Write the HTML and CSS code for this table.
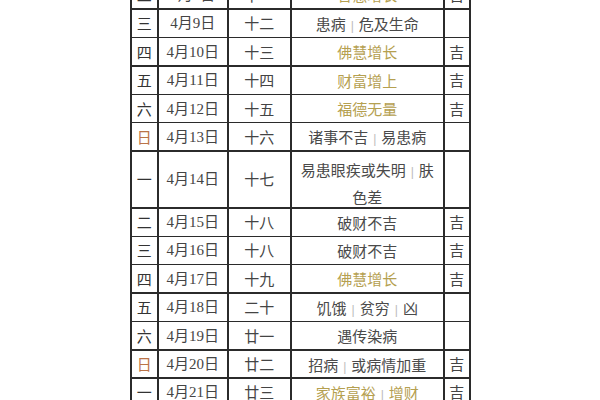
FILE: index.html
```html
<!DOCTYPE html>
<html lang="zh">
<head>
<meta charset="utf-8">
<link rel="stylesheet" href="styles.css">
</head>
<body>
<div class="page">
<div class="cal">
<div class="row"><div class="cell wd">二</div><div class="cell dt">4月8日</div><div class="cell ln">十一</div><div class="cell ev gold"><span class="txt">智慧增长</span></div><div class="cell jx">吉</div></div>
<div class="row"><div class="cell wd">三</div><div class="cell dt">4月9日</div><div class="cell ln">十二</div><div class="cell ev"><span class="txt">患病<span class="sep">|</span>危及生命</span></div><div class="cell jx"></div></div>
<div class="row"><div class="cell wd">四</div><div class="cell dt">4月10日</div><div class="cell ln">十三</div><div class="cell ev gold"><span class="txt">佛慧增长</span></div><div class="cell jx">吉</div></div>
<div class="row"><div class="cell wd">五</div><div class="cell dt">4月11日</div><div class="cell ln">十四</div><div class="cell ev gold"><span class="txt">财富增上</span></div><div class="cell jx">吉</div></div>
<div class="row"><div class="cell wd">六</div><div class="cell dt">4月12日</div><div class="cell ln">十五</div><div class="cell ev gold"><span class="txt">福德无量</span></div><div class="cell jx">吉</div></div>
<div class="row"><div class="cell wd sun">日</div><div class="cell dt">4月13日</div><div class="cell ln">十六</div><div class="cell ev"><span class="txt">诸事不吉<span class="sep">|</span>易患病</span></div><div class="cell jx"></div></div>
<div class="row"><div class="cell wd">一</div><div class="cell dt">4月14日</div><div class="cell ln">十七</div><div class="cell ev two"><span class="txt">易患眼疾或失明<span class="sep">|</span>肤色差</span></div><div class="cell jx"></div></div>
<div class="row"><div class="cell wd">二</div><div class="cell dt">4月15日</div><div class="cell ln">十八</div><div class="cell ev"><span class="txt">破财不吉</span></div><div class="cell jx">吉</div></div>
<div class="row"><div class="cell wd">三</div><div class="cell dt">4月16日</div><div class="cell ln">十八</div><div class="cell ev"><span class="txt">破财不吉</span></div><div class="cell jx">吉</div></div>
<div class="row"><div class="cell wd">四</div><div class="cell dt">4月17日</div><div class="cell ln">十九</div><div class="cell ev gold"><span class="txt">佛慧增长</span></div><div class="cell jx">吉</div></div>
<div class="row"><div class="cell wd">五</div><div class="cell dt">4月18日</div><div class="cell ln">二十</div><div class="cell ev"><span class="txt">饥饿<span class="sep">|</span>贫穷<span class="sep">|</span>凶</span></div><div class="cell jx"></div></div>
<div class="row"><div class="cell wd">六</div><div class="cell dt">4月19日</div><div class="cell ln">廿一</div><div class="cell ev"><span class="txt">遇传染病</span></div><div class="cell jx"></div></div>
<div class="row"><div class="cell wd sun">日</div><div class="cell dt">4月20日</div><div class="cell ln">廿二</div><div class="cell ev"><span class="txt">招病<span class="sep">|</span>或病情加重</span></div><div class="cell jx">吉</div></div>
<div class="row"><div class="cell wd">一</div><div class="cell dt">4月21日</div><div class="cell ln">廿三</div><div class="cell ev gold"><span class="txt">家族富裕<span class="sep">|</span>增财</span></div><div class="cell jx">吉</div></div>
</div>
</div>
</body>
</html>
```

FILE: styles.css
```css
html, body {
  margin: 0;
  padding: 0;
  background: #ffffff;
}
.page {
  width: 600px;
  height: 400px;
  overflow: hidden;
}
.cal {
  margin-top: -20px;
  margin-left: 130px;
  width: max-content;
  display: grid;
  grid-template-columns: 25.5px 68.5px 61.5px 151.5px 24.5px;
  grid-template-rows: repeat(6, 26.9px) 55.3px repeat(7, 26.9px);
  gap: 1.5px;
  padding: 1.5px;
  background: #2b2b2b;
  font-family: "Noto Sans CJK SC", "Noto Sans", sans-serif;
  font-size: 15px;
  color: #333;
}
.row {
  display: contents;
}
.cell {
  background: #ffffff;
  display: flex;
  align-items: center;
  justify-content: center;
  text-align: center;
  line-height: 18px;
  overflow: hidden;
}
.wd { color: #333; }
.wd.sun { color: #bb7448; }
.dt {
  font-family: "Liberation Serif", "Noto Sans CJK SC", serif;
  font-size: 15px;
  color: #444;
}
.ln { color: #444; }
.ev {
  color: #4a4a4a;
  padding: 0 3px;
  line-height: 27px;
}
.ev.two {
  padding-top: 6px;
}
.txt {
  display: block;
}
.ev.gold { color: #b5a050; }
.jx { color: #444; }
.sep {
  display: inline-block;
  color: #bbb;
  margin: 0 5px;
  font-family: "Liberation Sans", sans-serif;
  font-size: 12px;
  line-height: 14px;
}
```
